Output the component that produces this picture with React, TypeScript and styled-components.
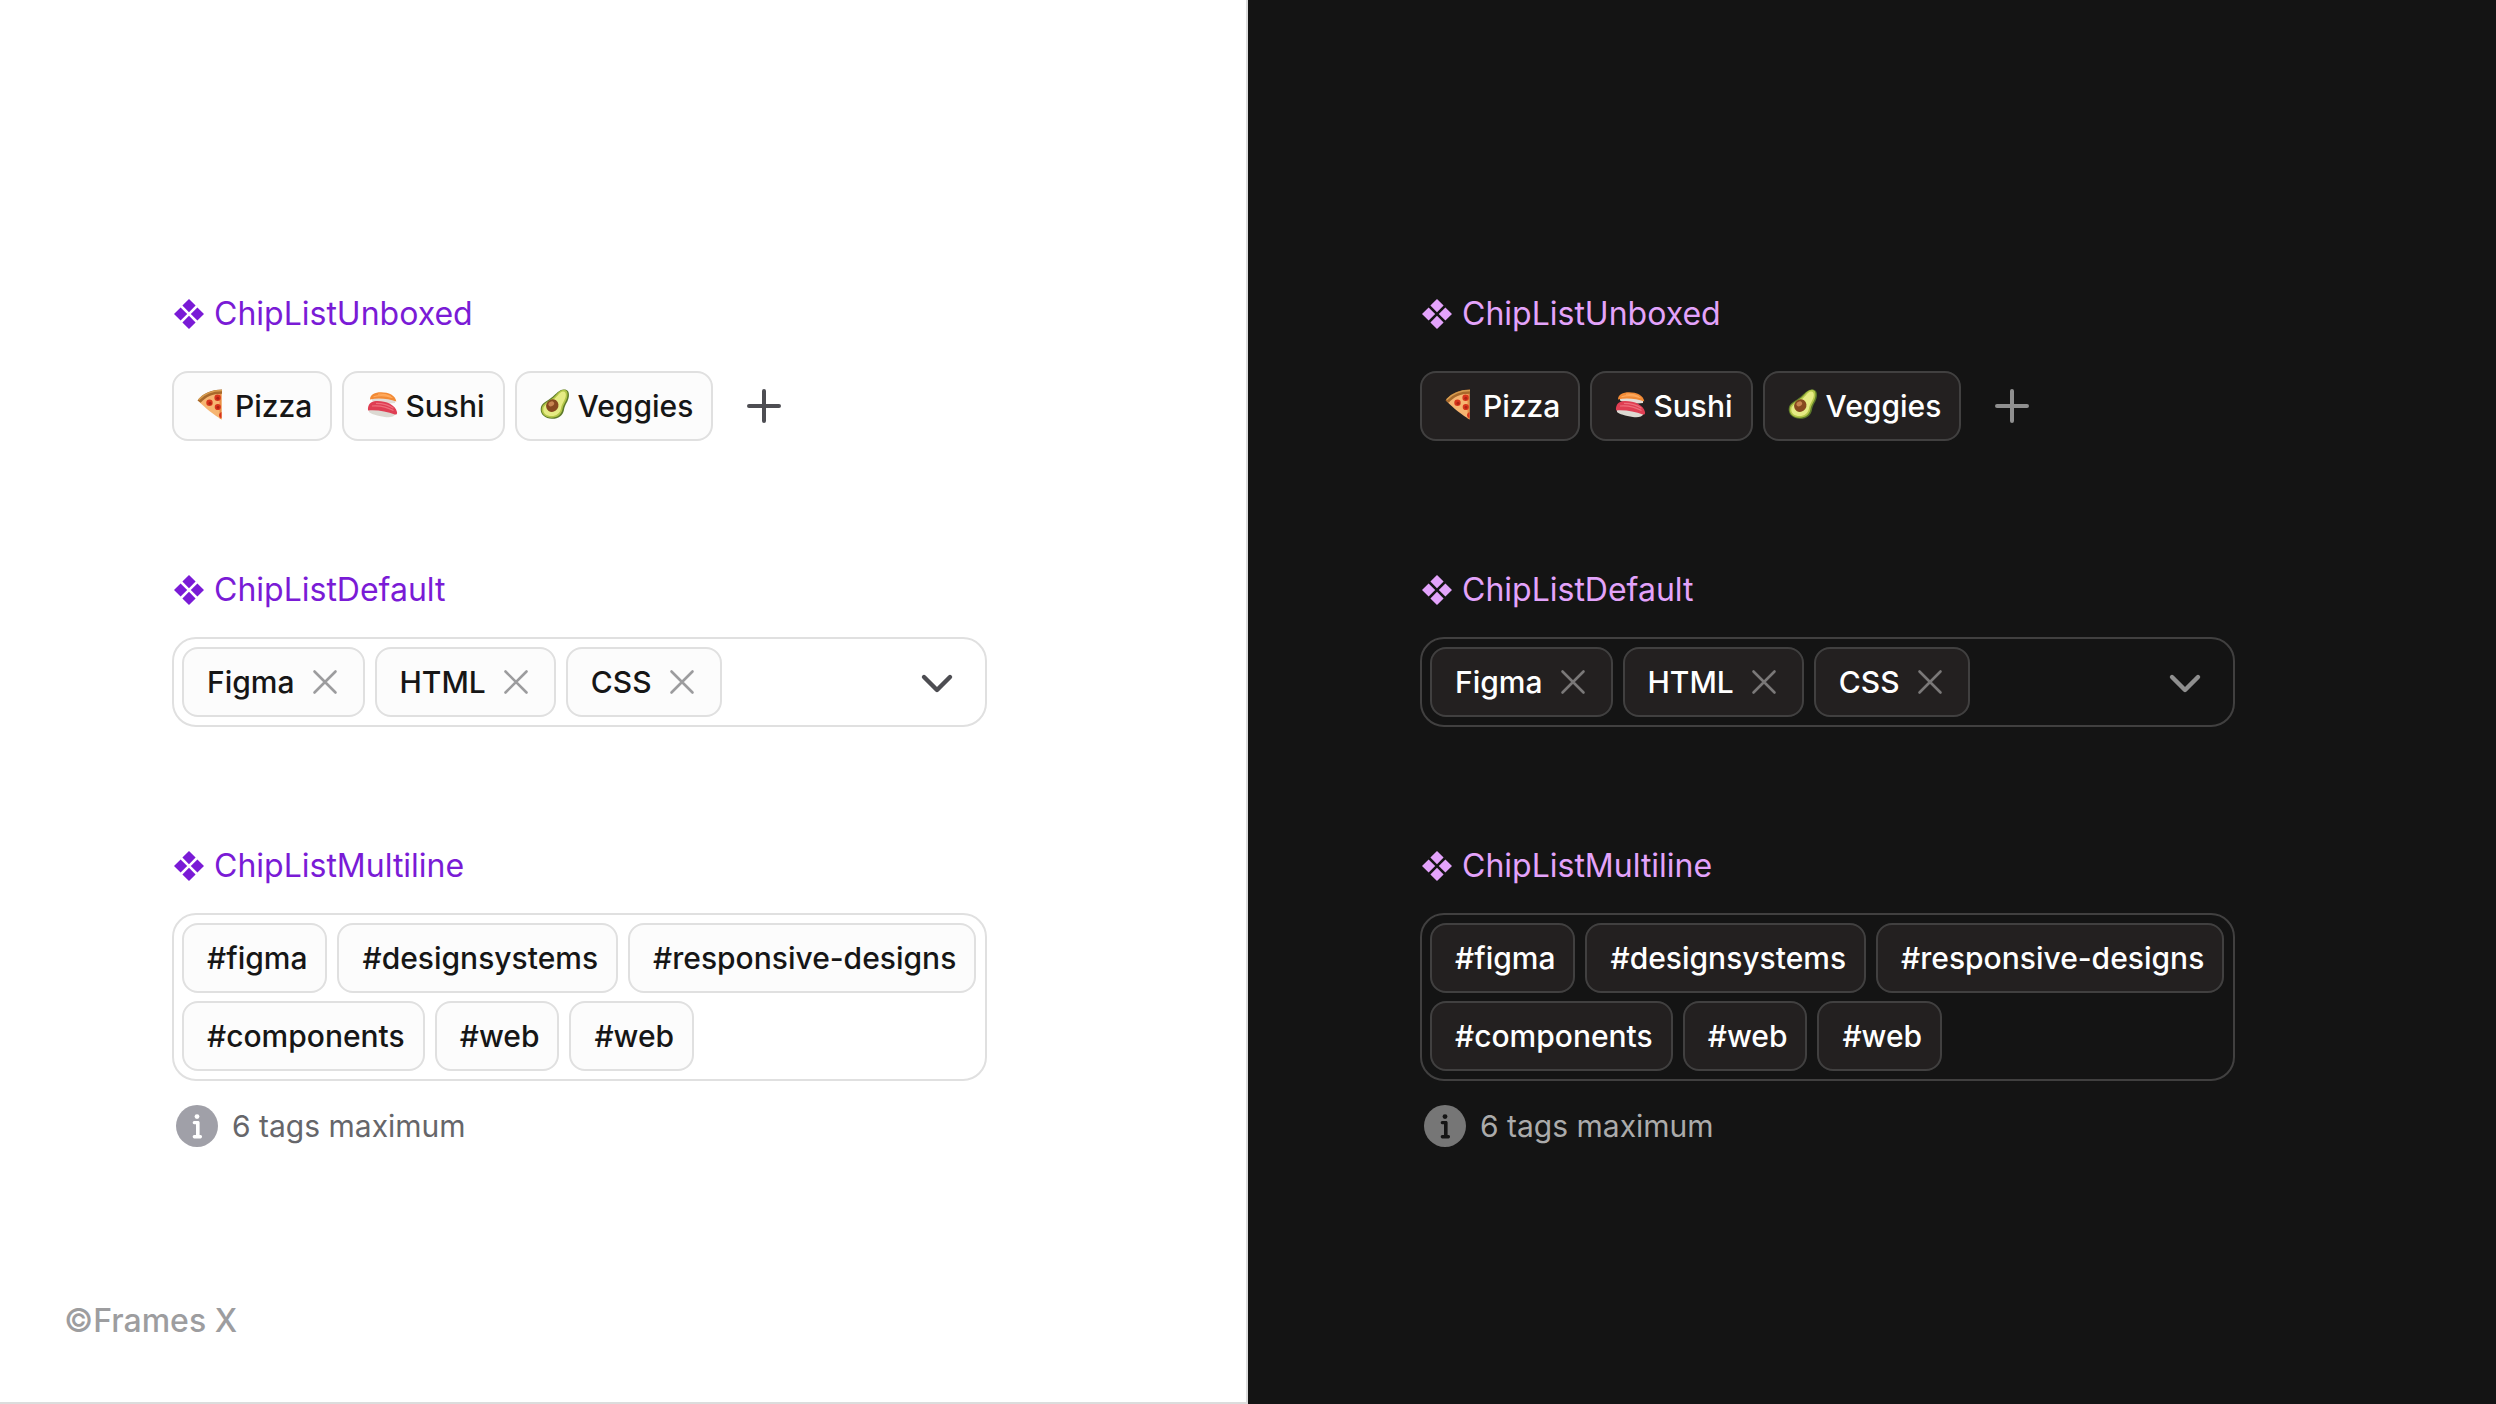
import React from "react";
import styled, { createGlobalStyle, ThemeProvider } from "styled-components";

const light = {
  page: "#ffffff", edge: "#dcdcdc", title: "#7a1bd6", border: "#e0e0e0", chip: "#fcfcfc",
  text: "#161616", action: "#4d4d52", close: "#9c9c9e", hint: "#66666a", info: "#a0a0a8", infoMark: "#ffffff",
};
const dark: typeof light = {
  page: "#141414", edge: "#141414", title: "#e3a3fb", border: "#414040", chip: "#232020",
  text: "#ffffff", action: "#8f8f8f", close: "#7a7878", hint: "#ababab", info: "#767676", infoMark: "#141414",
};

const GlobalStyle = createGlobalStyle`
  *, *::before, *::after { box-sizing: border-box; }
  body { margin: 0; font-family: Inter, "Liberation Sans", sans-serif; }
  ul, h2, p { margin: 0; padding: 0; }
  ul { list-style: none; }
  svg { display: block; flex: none; }
`;

const Page = styled.main`
  display: grid;
  grid-template-columns: 1fr 1fr;
  min-height: 100vh;
`;
const Panel = styled.section`
  display: flex;
  flex-direction: column;
  min-width: 0;
  padding: 294px 64px 61px;
  background: ${({ theme }: any) => theme.page};
  border: 2px solid ${({ theme }: any) => theme.edge};
  border-width: 0 2px 2px 0;
`;
const Stack = styled.div`
  display: flex;
  flex-direction: column;
  gap: 119px;
  width: 100%;
  padding-left: 108px;
`;
const Group = styled.section`
  display: flex;
  flex-direction: column;
`;
const Title = styled.h2`
  display: flex;
  align-items: center;
  gap: 8px;
  margin-bottom: 27px;
  font-size: 32px;
  line-height: 40px;
  font-weight: 400;
  color: ${({ theme }: any) => theme.title};
`;
const Field = styled.div<{ $boxed?: boolean }>`
  display: flex;
  align-items: center;
  width: 100%;
  max-width: 815px;
  padding: ${(p) => (p.$boxed ? "8px 6px 8px 8px" : "8px 0")};
  border: 2px solid ${(p: any) => (p.$boxed ? p.theme.border : "transparent")};
  border-width: ${(p) => (p.$boxed ? "2px" : "2px 0")};
  border-radius: 24px;
`;
const Chips = styled.ul`
  display: flex;
  flex-wrap: wrap;
  gap: 8px 10px;
`;
const Chip = styled.li<{ $removable?: boolean }>`
  display: flex;
  align-items: center;
  height: 70px;
  padding: 0 ${(p) => (p.$removable ? "22px" : "18px")} 0 23px;
  border: 2px solid ${({ theme }: any) => theme.border};
  border-radius: 16px;
  background: ${({ theme }: any) => theme.chip};
  color: ${({ theme }: any) => theme.text};
  font-size: 30px;
  line-height: 40px;
  font-weight: 500;
  white-space: nowrap;
`;
const Emoji = styled.svg`
  width: 32px;
  height: 32px;
  margin-right: 6px;
  overflow: visible;
`;
const IconButton = styled.button`
  display: flex;
  padding: 0;
  border: 0;
  background: none;
  color: ${({ theme }: any) => theme.action};
  cursor: pointer;
`;
const AddButton = styled(IconButton)`
  margin-left: 32px;
`;
const ToggleButton = styled(IconButton)`
  margin-left: auto;
  margin-right: 22px;
`;
const RemoveButton = styled(IconButton)`
  margin-left: 14px;
  color: ${({ theme }: any) => theme.close};
`;
const Hint = styled.p`
  display: flex;
  align-items: center;
  gap: 14px;
  margin-top: 24px;
  padding-left: 4px;
  font-size: 30px;
  line-height: 42px;
  color: ${({ theme }: any) => theme.hint};
`;
const Disc = styled.circle`
  fill: ${({ theme }: any) => theme.info};
`;
const Mark = styled.g`
  fill: ${({ theme }: any) => theme.infoMark};
`;
const Credit = styled.p`
  margin-top: auto;
  font-size: 32px;
  line-height: 40px;
  font-weight: 500;
  color: #9d9d9f;
`;

const DiamondIcon = () => (
  <svg width="34" height="34" viewBox="0 0 34 34" fill="currentColor" aria-hidden="true">
    <path d="M17 2l6.600 6.600L17 15.200l-6.600-6.600zM8.600 10.400l6.600 6.600-6.600 6.600L2 17zM25.400 10.400L32 17l-6.600 6.600-6.600-6.600zM17 18.800l6.600 6.600L17 32l-6.600-6.600z" />
  </svg>
);
const PlusIcon = () => (
  <svg width="38" height="38" viewBox="0 0 38 38" fill="none" stroke="currentColor" strokeWidth="4" strokeLinecap="round" aria-hidden="true">
    <path d="M19 4v30M4 19h30" />
  </svg>
);
const CrossIcon = () => (
  <svg width="32" height="32" viewBox="0 0 32 32" fill="none" stroke="currentColor" strokeWidth="2.600" strokeLinecap="round" aria-hidden="true">
    <path d="M5.500 5.500l21 21M26.500 5.500l-21 21" />
  </svg>
);
const ChevronIcon = () => (
  <svg width="40" height="40" viewBox="0 0 40 40" fill="none" stroke="currentColor" strokeWidth="4.400" strokeLinecap="round" strokeLinejoin="round" aria-hidden="true">
    <path d="M7 15l13 13 13-13" />
  </svg>
);
const InfoIcon = () => (
  <svg width="42" height="42" viewBox="0 0 42 42" aria-hidden="true">
    <Disc cx="21" cy="21" r="21" />
    <Mark>
      <circle cx="21" cy="11.600" r="2.400" />
      <path d="M18.200 16h3.800c1 0 1.600.6 1.600 1.600v12.400h.9c2 0 2 3.400 0 3.400h-6.300c-2 0-2-3.400 0-3.400H20V19.200h-1.800c-2 0-2-3.200 0-3.200z" />
    </Mark>
  </svg>
);

const Pizza = () => (
  <Emoji viewBox="1 2 32 32" aria-hidden="true">
    <path d="M2.500 13C8 6.500 15.500 3 25.500 3v28.500C19 27.500 9 20 2.500 13z" fill="#f6b571" />
    <path d="M23.500 5h2v26.500l-2-1.300z" fill="#e98f46" />
    <path d="M1.500 12.500C6.500 5.500 15 1.500 26 1.500v4.300C16.500 5.800 9.800 9 4.600 14.800z" fill="#a8692b" />
    <path d="M2.600 11.800C8 6 16 2.500 26 2.500" stroke="#d69d51" strokeWidth="1.400" fill="none" />
    <g fill="#d8341c"><circle cx="13.500" cy="14.800" r="3.200" /><circle cx="21.600" cy="9.800" r="3.200" /><circle cx="21.800" cy="19" r="3.100" /><path d="M25.500 24v6c-3-.3-3.600-4.600 0-6z" /></g>
    <g fill="#ad2414"><circle cx="14" cy="15.300" r="1.500" /><circle cx="21.800" cy="10.200" r="1.500" /><circle cx="22" cy="19.400" r="1.400" /></g>
  </Emoji>
);
const Sushi = () => (
  <Emoji viewBox="1 2 32 32" aria-hidden="true">
    <path d="M6 9.500c7-1.500 16-1 23 1.500v4c-6 1-18 0-23-2.500z" fill="#e3dcd6" />
    <path d="M4 11.500C4 6.800 9 4.300 15 4.300c7.500 0 14.800 3.200 15.300 9.300-7.300-2.800-18-3.900-26.300-2.100z" fill="#f28a35" />
    <path d="M7.500 8.800c6-1.800 13-1.200 19 1M12 6.200c5-.3 9 .6 13 2.300" stroke="#ffa95c" strokeWidth="1.100" fill="none" />
    <path d="M2.800 21c7-1 19 1 27 4.500-1.500 3.500-6 4.400-11 3.500C11.500 27.800 5 26 3 24z" fill="#dcd9d2" />
    <path d="M2 22.500C1.500 16.500 5 13.300 10 13.100c9-.5 19.500 3.500 21 10.800.4 2-.6 3-2.200 2.500C21 23.800 11 21.500 2 22.500z" fill="#df3e53" />
    <path d="M6 18c8-.8 15.500 1.200 21.500 4.600M10 15.300c6.500 0 13 1.800 17.500 5" stroke="#ee6f7c" strokeWidth="1.200" fill="none" />
  </Emoji>
);
const Avocado = () => (
  <Emoji viewBox="1 2 32 32" aria-hidden="true">
    <path d="M24.600 1.500c3.700-.4 5.900 2.300 5.300 6.700-.8 6-4 7.600-5 14C24 27.500 19 31 13 30.800 6 30.500 1.400 26.500 1.700 21 2 14.600 8.400 13.300 13.600 8.800 17.500 5.400 20 2 24.600 1.500z" fill="#5d7a2a" />
    <path d="M24 1.900c3.500-.3 5 2 4.400 6-.8 5.500-4 7.900-5 13.600C22.600 26.500 18 29.800 12.500 29.700 6.500 29.500 2.400 26 2.700 21.200 3 15.300 9 14 14.200 9.700 18 6.500 20 2.300 24 1.900z" fill="#b3c648" />
    <path d="M23.700 3.400c2.400-.2 3.500 1.400 3.100 4.400-.7 5-4 7.500-4.900 13-.8 4.500-4.800 7.400-9.400 7.300-5-.1-8.500-2.900-8.200-6.900.3-5 5.900-6.200 10.900-10.300 3.700-3 5.400-7.200 8.500-7.500z" fill="#e6eb84" />
    <ellipse cx="13.300" cy="17.600" rx="6" ry="6.500" transform="rotate(35 13.300 17.600)" fill="#87491f" />
    <ellipse cx="12.300" cy="15.900" rx="3" ry="2.300" transform="rotate(-35 12.300 15.900)" fill="#c88550" />
  </Emoji>
);

const foods = [
  { name: "Pizza", Icon: Pizza },
  { name: "Sushi", Icon: Sushi },
  { name: "Veggies", Icon: Avocado },
];
const skills = ["Figma", "HTML", "CSS"];
const tags = ["#figma", "#designsystems", "#responsive-designs", "#components", "#web", "#web"];

const Heading = ({ children }: { children: React.ReactNode }) => (
  <Title><DiamondIcon />{children}</Title>
);

const Showcase = () => (
  <Stack>
    <Group>
      <Heading>ChipListUnboxed</Heading>
      <Field>
        <Chips>{foods.map(({ name, Icon }) => <Chip key={name}><Icon />{name}</Chip>)}</Chips>
        <AddButton type="button" aria-label="Add"><PlusIcon /></AddButton>
      </Field>
    </Group>
    <Group>
      <Heading>ChipListDefault</Heading>
      <Field $boxed>
        <Chips>
          {skills.map((s) => (
            <Chip key={s} $removable>{s}<RemoveButton type="button" aria-label={`Remove ${s}`}><CrossIcon /></RemoveButton></Chip>
          ))}
        </Chips>
        <ToggleButton type="button" aria-label="Open list"><ChevronIcon /></ToggleButton>
      </Field>
    </Group>
    <Group>
      <Heading>ChipListMultiline</Heading>
      <Field $boxed>
        <Chips>{tags.map((t, i) => <Chip key={i}>{t}</Chip>)}</Chips>
      </Field>
      <Hint><InfoIcon />6 tags maximum</Hint>
    </Group>
  </Stack>
);

export default function App() {
  return (
    <>
      <GlobalStyle />
      <Page>
        <ThemeProvider theme={light}>
          <Panel><Showcase /><Credit>©Frames X</Credit></Panel>
        </ThemeProvider>
        <ThemeProvider theme={dark}>
          <Panel><Showcase /></Panel>
        </ThemeProvider>
      </Page>
    </>
  );
}
